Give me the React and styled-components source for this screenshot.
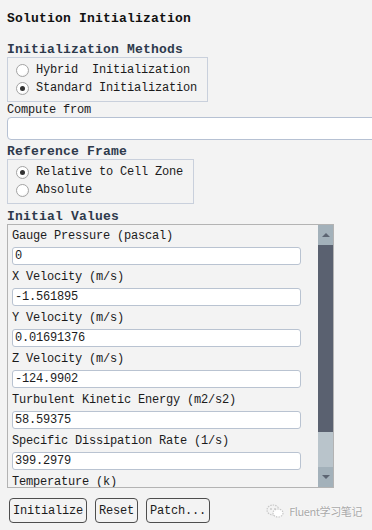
import styled, { createGlobalStyle } from 'styled-components';

const GlobalStyle = createGlobalStyle`
  html, body {
    margin: 0;
    padding: 0;
    background: #f3f3f3;
  }
  body {
    font-family: "Liberation Mono", "DejaVu Sans Mono", monospace;
    font-size: 12px;
    color: #1b1b1b;
  }
`;

const Page = styled.div`
  position: relative;
  width: 372px;
  height: 530px;
  overflow: hidden;
  padding-left: 7px;
  box-sizing: border-box;
  letter-spacing: -0.2px;
`;

const Title = styled.div`
  margin-top: 12px;
  height: 14px;
  line-height: 14px;
  font-size: 13px;
  font-weight: bold;
  letter-spacing: 0.2px;
  color: #111;
`;

const SectionLabel = styled.div`
  margin-top: ${p => p.top}px;
  height: 14px;
  line-height: 14px;
  font-size: 13px;
  font-weight: bold;
  letter-spacing: 0.2px;
  color: #2e3a4c;
`;

const GroupBox = styled.div`
  width: ${p => p.width}px;
  box-sizing: border-box;
  border: 1px solid #c9d0dc;
  padding: 3px 0 4px 8px;
  display: flex;
  flex-direction: column;
`;

const RadioRow = styled.label`
  display: flex;
  align-items: center;
  gap: 7px;
  height: 18px;
  white-space: pre;
`;

const RadioDot = styled.span`
  width: 13px;
  height: 13px;
  box-sizing: border-box;
  border-radius: 50%;
  border: 1px solid #a4a4a4;
  background: radial-gradient(circle at 40% 35%, #ffffff 55%, #e6e6e6 100%);
  display: flex;
  align-items: center;
  justify-content: center;
  &::after {
    content: '';
    width: 5px;
    height: 5px;
    border-radius: 50%;
    background: ${p => (p.checked ? '#333' : 'transparent')};
  }
`;

const PlainLabel = styled.div`
  margin-top: 1px;
  height: 14px;
  line-height: 14px;
`;

const WideInput = styled.div`
  width: 380px;
  height: 23px;
  box-sizing: border-box;
  background: #fff;
  border: 1px solid #b6c1d3;
  border-radius: 4px;
`;

const Panel = styled.div`
  width: 327px;
  height: 264px;
  box-sizing: border-box;
  border: 1px solid #b3b3b3;
  display: flex;
`;

const Fields = styled.div`
  flex: 1;
  overflow: hidden;
  padding-left: 4px;
`;

const Field = styled.div`
  margin-bottom: 1px;
`;

const FieldLabel = styled.div`
  height: 22px;
  line-height: 22px;
  white-space: pre;
`;

const ValueBox = styled.div`
  width: 289px;
  height: 18px;
  line-height: 16px;
  box-sizing: border-box;
  background: #fff;
  border: 1px solid #b9c3d1;
  border-radius: 3px;
  padding-left: 2px;
`;

const ScrollBar = styled.div`
  width: 15px;
  display: flex;
  flex-direction: column;
`;

const ScrollButton = styled.div`
  height: 20px;
  background: #a3b1ba;
  display: flex;
  align-items: center;
  justify-content: center;
  &::after {
    content: '';
    border-left: 4px solid transparent;
    border-right: 4px solid transparent;
    ${p => (p.down ? 'border-top: 4px solid #5d6572;' : 'border-bottom: 4px solid #5d6572;')}
  }
`;

const Thumb = styled.div`
  height: 187px;
  background: #5a6170;
`;

const Track = styled.div`
  flex: 1;
  background: #b9c4cb;
`;

const ButtonRow = styled.div`
  margin-top: 10px;
  padding-left: 2px;
  display: flex;
  gap: 8px;
`;

const Button = styled.button`
  height: 25px;
  line-height: 23px;
  padding: 0 3px;
  margin: 0;
  font: inherit;
  letter-spacing: inherit;
  color: #1b1b1b;
  background: #f3f3f3;
  border: 1px solid #4e4e4e;
  border-radius: 4px;
`;

const Watermark = styled.div`
  position: absolute;
  right: 10px;
  bottom: 11px;
  display: flex;
  align-items: center;
  gap: 5px;
  font-family: "Noto Sans CJK SC", "Noto Sans", sans-serif;
  font-size: 11px;
  letter-spacing: -0.4px;
  color: #a9a9a9;
  text-shadow: 0 0 2px #fff, 0 0 1px #fff;
`;

const WeChatIcon = () => (
  <svg width="18" height="14" viewBox="0 0 18 14">
    <ellipse cx="7" cy="6" rx="6" ry="5" fill="none" stroke="#c8c8c8" strokeWidth="1.2" strokeDasharray="1.5 1" />
    <ellipse cx="12" cy="9" rx="5" ry="4" fill="#fff" stroke="#c8c8c8" strokeWidth="1.2" strokeDasharray="1.5 1" />
    <circle cx="5" cy="5" r="0.9" fill="#c8c8c8" />
    <circle cx="9" cy="5" r="0.9" fill="#c8c8c8" />
  </svg>
);

// the last row is scrolled past the panel edge, only its label shows
const values = [
  ['Gauge Pressure (pascal)', '0'],
  ['X Velocity (m/s)', '-1.561895'],
  ['Y Velocity (m/s)', '0.01691376'],
  ['Z Velocity (m/s)', '-124.9902'],
  ['Turbulent Kinetic Energy (m2/s2)', '58.59375'],
  ['Specific Dissipation Rate (1/s)', '399.2979'],
  ['Temperature (k)', ''],
];

export default function App() {
  return (
    <>
      <GlobalStyle />
      <Page>
        <Title>Solution Initialization</Title>

        <SectionLabel top={17}>Initialization Methods</SectionLabel>
        <GroupBox width={201}>
          <RadioRow><RadioDot />Hybrid  Initialization</RadioRow>
          <RadioRow><RadioDot checked />Standard Initialization</RadioRow>
        </GroupBox>

        <PlainLabel>Compute from</PlainLabel>
        <WideInput />

        <SectionLabel top={5}>Reference Frame</SectionLabel>
        <GroupBox width={187}>
          <RadioRow><RadioDot checked />Relative to Cell Zone</RadioRow>
          <RadioRow><RadioDot />Absolute</RadioRow>
        </GroupBox>

        <SectionLabel top={6}>Initial Values</SectionLabel>
        <Panel>
          <Fields>
            {values.map(([label, value]) => (
              <Field key={label}>
                <FieldLabel>{label}</FieldLabel>
                {value && <ValueBox>{value}</ValueBox>}
              </Field>
            ))}
          </Fields>
          <ScrollBar>
            <ScrollButton />
            <Thumb />
            <Track />
            <ScrollButton down />
          </ScrollBar>
        </Panel>

        <ButtonRow>
          <Button>Initialize</Button>
          <Button>Reset</Button>
          <Button>Patch...</Button>
        </ButtonRow>

        <Watermark>
          <WeChatIcon />
          <span>Fluent学习笔记</span>
        </Watermark>
      </Page>
    </>
  );
}
